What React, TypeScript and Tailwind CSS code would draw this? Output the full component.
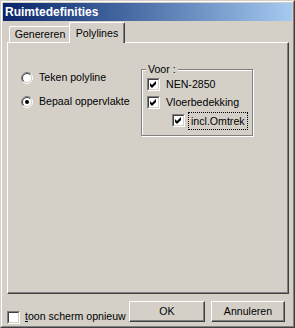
import React from "react";

const FONT = { fontFamily: '"Liberation Sans", Arial, sans-serif' };

const Radio = ({ checked }: { checked?: boolean }) => (
  <svg width="12" height="12" viewBox="0 0 12 12" className="shrink-0">
    <circle cx="6" cy="6" r="4.5" fill="#ffffff" />
    <path d="M2.1 9.9 A5.5 5.5 0 0 1 9.9 2.1" fill="none" stroke="#808080" strokeWidth="1" />
    <path d="M9.9 2.1 A5.5 5.5 0 0 1 2.1 9.9" fill="none" stroke="#ffffff" strokeWidth="1" />
    <path d="M2.8 9.2 A4.5 4.5 0 0 1 9.2 2.8" fill="none" stroke="#404040" strokeWidth="1" />
    <path d="M9.2 2.8 A4.5 4.5 0 0 1 2.8 9.2" fill="none" stroke="#d4d0c8" strokeWidth="1" />
    {checked && <circle cx="6" cy="6" r="2" fill="#000000" />}
  </svg>
);

const Check = ({ checked }: { checked?: boolean }) => (
  <div className="w-[13px] h-[13px] shrink-0 border border-t-[#808080] border-l-[#808080] border-r-white border-b-white">
    <div className="w-full h-full bg-white border border-t-[#404040] border-l-[#404040] border-r-[#d4d0c8] border-b-[#d4d0c8]">
      {checked && (
        <svg width="9" height="9" viewBox="0 0 9 9" className="block">
          <path d="M1 3 L3 5 L7 1 L7 4 L3 8 L1 6 Z" fill="#000000" />
        </svg>
      )}
    </div>
  </div>
);

const Button = ({ label, w }: { label: string; w: string }) => (
  <div className={`${w} h-[21px] shrink-0 border border-t-white border-l-white border-r-[#404040] border-b-[#404040] shadow-[inset_-1px_-1px_0_#808080] flex items-center justify-center text-[10.6px] text-black`}>
    {label}
  </div>
);

export default function App() {
  return (
    <div style={FONT} className="w-[295px] h-[328px] bg-[#d4d0c8] border border-t-[#d4d0c8] border-l-[#d4d0c8] border-r-[#404040] border-b-[#404040]">
      <div className="w-full h-full border border-t-white border-l-white border-r-[#808080] border-b-[#808080] p-px flex flex-col">
        {/* title bar */}
        <div className="h-[18px] bg-gradient-to-r from-[#0a246a] to-[#a6caf0] flex items-center pl-[2px]">
          <span className="text-white font-bold text-[12px] leading-none">Ruimtedefinities</span>
        </div>

        {/* tabs */}
        <div className="flex items-end mt-px pl-[6px] h-[20px] relative z-10 text-[10.6px] text-black">
          <div className="w-[62px] h-[16px] border-l border-t border-r border-l-white border-t-white border-r-[#404040] shadow-[inset_-1px_0_0_#808080] rounded-tl-[2px] rounded-tr-[2px] flex items-center justify-center">
            Genereren
          </div>
          <div className="w-[56px] h-[21px] -ml-[2px] -mb-px bg-[#d4d0c8] border-l border-t border-r border-l-white border-t-white border-r-[#404040] shadow-[inset_-1px_0_0_#808080] rounded-tl-[2px] rounded-tr-[2px] flex items-start justify-center pt-[3px]">
            Polylines
          </div>
        </div>

        {/* panel */}
        <div className="ml-[4px] mr-[3px] h-[253px] border border-t-white border-l-white border-r-[#404040] border-b-[#404040] shadow-[inset_-1px_-1px_0_#808080] flex items-start pl-[13px] text-[10.6px] text-black">
          <div className="w-[120px] mt-[23px] flex flex-col whitespace-nowrap">
            <div className="h-[24px] flex items-center gap-[6px]">
              <Radio />
              <span>Teken polyline</span>
            </div>
            <div className="h-[24px] flex items-center gap-[6px]">
              <Radio checked />
              <span>Bepaal oppervlakte</span>
            </div>
          </div>

          <div className="relative w-[112px] mt-[26px] border border-[#808080] shadow-[inset_1px_1px_0_#ffffff,1px_1px_0_#ffffff] pl-[5px] pt-[6px] pb-[5px] whitespace-nowrap">
            <span className="absolute left-[4px] -top-[8px] bg-[#d4d0c8] px-[2px] leading-[14px]">Voor :</span>
            <div className="h-[18px] flex items-center gap-[6px]">
              <Check checked />
              <span>NEN-2850</span>
            </div>
            <div className="h-[18px] flex items-center gap-[6px]">
              <Check checked />
              <span>Vloerbedekking</span>
            </div>
            <div className="h-[18px] flex items-center gap-[3px] pl-[25px]">
              <Check checked />
              <span className="border border-dotted border-black px-[2px] leading-[16px]">incl.Omtrek</span>
            </div>
          </div>
        </div>

        {/* bottom */}
        <div className="flex-1 flex items-start justify-between pl-[4px] pr-[7px] text-[10.6px] text-black">
          <div className="flex items-center gap-[5px] mt-[15px] whitespace-nowrap">
            <Check />
            <span>
              <span className="underline">t</span>oon scherm opnieuw
            </span>
          </div>
          <div className="flex gap-[6px] mt-[7px]">
            <Button label="OK" w="w-[76px]" />
            <Button label="Annuleren" w="w-[74px]" />
          </div>
        </div>
      </div>
    </div>
  );
}
